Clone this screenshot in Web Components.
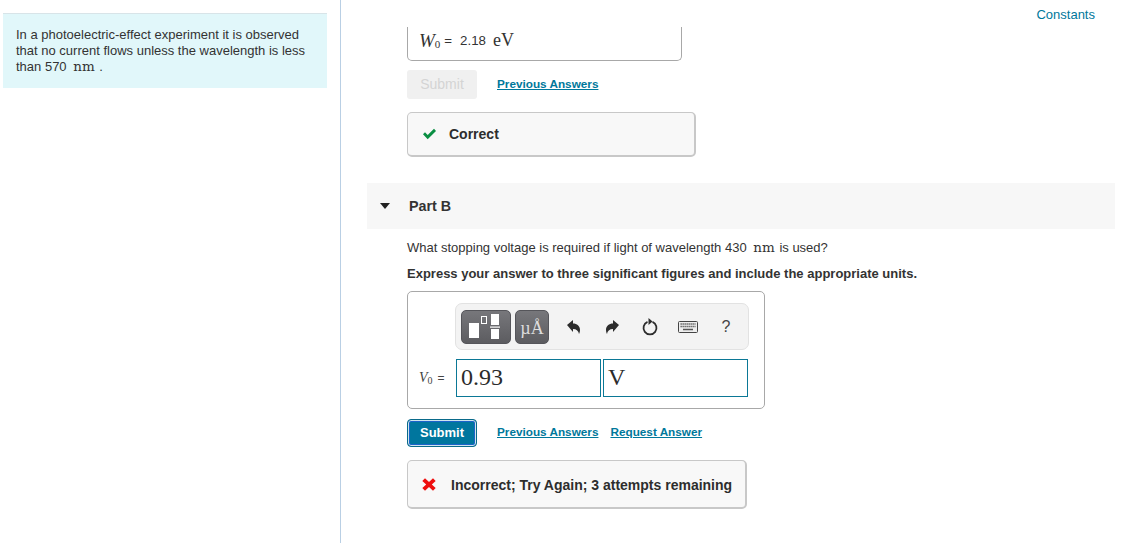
<!DOCTYPE html>
<html>
<head>
<meta charset="utf-8">
<title>Part B</title>
<style>
    html, body { margin: 0; height: 543px; overflow: hidden; background: #fff; }
    body { font-family: "Liberation Sans", Arial, sans-serif; font-size: 13px; color: #333; }
</style>
</head>
<body>
<quiz-page>
    <intro-panel slot="side">In a photoelectric-effect experiment it is observed<br>that no current flows unless the wavelength is less<br>than 570 <unit-text>nm</unit-text> .</intro-panel>

    <cut-answer></cut-answer>
    <action-row disabled></action-row>
    <feedback-box kind="ok" style="width:289px;height:45px;margin-top:13px">Correct</feedback-box>
    <part-header>Part B</part-header>
    <p-line style="margin-top:10px">What stopping voltage is required if light of wavelength 430 <unit-text>nm</unit-text> is used?</p-line>
    <p-line bold style="margin-top:8px">Express your answer to three significant figures and include the appropriate units.</p-line>
    <answer-box></answer-box>
    <action-row request></action-row>
    <feedback-box kind="bad" style="width:340px;height:49px;margin-top:13px;padding-top:1px">Incorrect; Try Again; 3 attempts remaining</feedback-box>
</quiz-page>

<script>
// page frame: left panel, divider, main column
class QuizPage extends HTMLElement {
    connectedCallback() {
        const root = this.attachShadow({ mode: "open" });
        root.innerHTML = `
        <style>
            :host { display: grid; grid-template-columns: 341px 1fr; height: 543px; }
            aside { border-right: 1px solid #b9cfe4; padding: 13px 13px 0 3px; }
            main { padding-left: 26px; min-width: 0; }
            .top { height: 27px; padding-right: 51px; text-align: right; line-height: 29px; font-size: 13px; }
            .top a { color: #00789b; text-decoration: none; }
            .body { display: flex; flex-direction: column; align-items: flex-start; padding-left: 40px; }
        </style>
        <aside><slot name="side"></slot></aside>
        <main>
            <div class="top"><a href="#">Constants</a></div>
            <div class="body"><slot></slot></div>
        </main>`;
    }
}

class IntroPanel extends HTMLElement {
    connectedCallback() {
        const root = this.attachShadow({ mode: "open" });
        root.innerHTML = `
        <style>
            :host { display: block; box-sizing: border-box; width: 324px; height: 75px; background: #e1f7fa;
                border-top: 1px solid #d8e4e8; padding: 13px 13px 0; line-height: 16px; font-size: 13px; color: #333; }
        </style>
        <slot></slot>`;
    }
}

class UnitText extends HTMLElement {
    connectedCallback() {
        const root = this.attachShadow({ mode: "open" });
        root.innerHTML = `
        <style>
            :host { font-family: "DejaVu Serif", "Liberation Serif", serif; font-size: 13.5px; line-height: 0; margin: 0 1px 0 3px; }
        </style>
        <slot></slot>`;
    }
}

class CutAnswer extends HTMLElement {
    connectedCallback() {
        const root = this.attachShadow({ mode: "open" });
        root.innerHTML = `
        <style>
            :host { display: flex; align-items: center; box-sizing: border-box; width: 275px; height: 34px;
                border: 1px solid #a8a8a8; border-top: 0; border-radius: 0 0 5px 5px; padding: 0 10px 6px 11px; font-size: 13.3px; color: #333; }
            i { font: italic 19px "Liberation Serif", serif; }
            sub { font: 11px "Liberation Serif", serif; margin-top: 7px; }
            .eq { margin: 0 8px 0 4px; }
            .u { font: 18px "Liberation Serif", serif; margin-left: 7px; }
        </style>
        <i>W</i><sub>0</sub><span class="eq">=</span><span>2.18</span><span class="u">eV</span>`;
    }
}

class ActionRow extends HTMLElement {
    connectedCallback() {
        const off = this.hasAttribute("disabled");
        const root = this.attachShadow({ mode: "open" });
        root.innerHTML = `
        <style>
            :host { display: flex; align-items: center; gap: 12px; margin-top: ${off ? 9 : 10}px; height: ${off ? 29 : 28}px; }
            button { box-sizing: border-box; width: 70px; height: 100%; margin-right: 8px; padding: 0 0 1px; border-radius: 3px; }
            .off { background: #f0f0f0; color: #d4d4d4; border: 0; font: 14px "Liberation Sans", sans-serif; }
            .on { background: #00769e; color: #fff; border: 1px solid #0a6a8a; border-radius: 4px; font: bold 13px "Liberation Sans", sans-serif;
                box-shadow: inset 0 0 0 1px #cfe5ee, inset 0 0 0 2px #1b63c9; }
            a { color: #00789b; font-weight: bold; font-size: 11.75px; margin-bottom: ${off ? 2 : 3}px; }
        </style>
        <button class="${off ? "off" : "on"}">Submit</button>
        <a href="#">Previous Answers</a>
        ${this.hasAttribute("request") ? '<a href="#">Request Answer</a>' : ""}`;
    }
}

class FeedbackBox extends HTMLElement {
    connectedCallback() {
        const ok = this.getAttribute("kind") === "ok";
        const icon = ok
            ? `<svg width="15" height="12" viewBox="0 0 15 12"><path d="M1 6.300 3 4.200 5.700 7 12 .8l2 2.100-8.300 8.400z" fill="#0a8f43"/></svg>`
            : `<svg width="14" height="13" viewBox="0 0 14 13"><path d="M3 .3 7 4 11 .3l2.700 2.600L9.800 6.500l3.900 3.600-2.700 2.600L7 9 3 12.700.3 10.100l3.900-3.600L.3 2.900z" fill="#ee0f0f"/></svg>`;
        const root = this.attachShadow({ mode: "open" });
        root.innerHTML = `
        <style>
            :host { display: flex; align-items: center; box-sizing: border-box; background: #f8f8f8;
                border: 1px solid #c8c8c8; border-right-width: 2px; border-bottom-width: 2px; border-radius: 5px; padding-left: 14px;
                font-weight: bold; font-size: 14px; color: #2d2d2d; }
            span { margin-left: ${ok ? 12 : 15}px; }
            svg { flex: none; }
        </style>
        ${icon}<span><slot></slot></span>`;
    }
}

class PartHeader extends HTMLElement {
    connectedCallback() {
        const root = this.attachShadow({ mode: "open" });
        root.innerHTML = `
        <style>
            :host { display: flex; align-items: center; box-sizing: border-box; width: 748px; height: 46px; margin: 26px 0 0 -40px;
                background: #f7f7f7; padding-left: 13px; font-weight: bold; font-size: 14.3px; color: #333; }
            i { width: 0; height: 0; border: 5.5px solid transparent; border-top: 6px solid #222; border-bottom: 0; margin-right: 19px; }
        </style>
        <i></i><slot></slot>`;
    }
}

class PLine extends HTMLElement {
    connectedCallback() {
        const bold = this.hasAttribute("bold");
        const root = this.attachShadow({ mode: "open" });
        root.innerHTML = `
        <style>
            :host { display: block; height: 18px; line-height: 18px; font-size: 13px; font-weight: ${bold ? "bold" : "normal"}; color: #333; white-space: nowrap; }
        </style>
        <slot></slot>`;
    }
}

class MathToolbar extends HTMLElement {
    connectedCallback() {
        const root = this.attachShadow({ mode: "open" });
        root.innerHTML = `
        <style>
            :host { display: flex; align-items: center; box-sizing: border-box; width: 294px; height: 47px; background: #f3f3f3;
                border: 1px solid #e2e2e2; border-radius: 7px; padding-left: 5px; }
            .dark { box-sizing: border-box; height: 34px; border: 1px solid #55555a; border-radius: 5px;
                background: linear-gradient(#77777b, #5c5c60); display: flex; align-items: center; justify-content: center; }
            .t { width: 50px; margin-right: 4px; }
            .m { width: 34px; color: #ddd; font: 18px "Liberation Serif", serif; padding-top: 3px; }
            .tool { width: 38px; display: flex; justify-content: center; align-items: center; color: #444; }
            .q { font-size: 16px; }
        </style>
        <div class="dark t">
            <svg width="40" height="28" viewBox="0 0 40 28" fill="#fff"><rect x="3" y="10" width="10" height="15"/><rect x="15.500" y="3.500" width="5" height="7" fill="none" stroke="#fff"/><rect x="25" y="1" width="8" height="11"/><rect x="24" y="13.500" width="10" height="1.200"/><rect x="25" y="16" width="8" height="10"/></svg>
        </div>
        <div class="dark m">µÅ</div>
        <div class="tool" style="margin-left:6px"><svg width="16" height="16" viewBox="0 0 16 16"><path d="M1 6 7 1v3.500c4 0 7 2.500 7 6.500 0 1.500-.5 3-1 4-.3-3-2.500-5-6-5v3z" fill="#2c2c2c"/></svg></div>
        <div class="tool"><svg width="16" height="16" viewBox="0 0 16 16"><path d="M15 6 9 1v3.500c-4 0-7 2.500-7 6.500 0 1.500.5 3 1 4 .3-3 2.500-5 6-5v3z" fill="#2c2c2c"/></svg></div>
        <div class="tool"><svg width="18" height="18" viewBox="0 0 18 18"><path d="M6.500 3.900a6.500 6.500 0 1 0 5 0" fill="none" stroke="#2c2c2c" stroke-width="1.800"/><path d="M7.500 0v7l4-3.500z" fill="#2c2c2c"/></svg></div>
        <div class="tool"><svg width="20" height="12" viewBox="0 0 20 12"><rect x=".5" y=".5" width="19" height="11" rx="1" fill="#eee" stroke="#444"/><path d="M2.500 3h15M2.500 5.500h15" stroke="#555" stroke-width="1.300" stroke-dasharray="1.300 .7"/><path d="M5 8.500h10" stroke="#555" stroke-width="1.500"/></svg></div>
        <div class="tool q">?</div>`;
    }
}

class AnswerBox extends HTMLElement {
    connectedCallback() {
        const root = this.attachShadow({ mode: "open" });
        root.innerHTML = `
        <style>
            :host { display: block; box-sizing: border-box; width: 358px; height: 118px; margin-top: 8px;
                border: 1px solid #a8a8a8; border-radius: 5px; padding: 11px 0 0 47px; }
            .row { display: flex; align-items: center; margin-top: 9px; margin-left: -36px; gap: 2px; }
            .lab { width: 35px; font-size: 12px; color: #444; white-space: nowrap; }
            .lab i { font: italic 14px "Liberation Serif", serif; }
            .lab sub { font: 10px "Liberation Serif", serif; vertical-align: -2px; margin-right: 5px; }
            .inp { box-sizing: border-box; width: 145px; height: 38px; border: 1px solid #0b7896; padding-left: 4px;
                font: 24px/35px "Liberation Serif", serif; color: #2b2b2b; }
        </style>
        <math-toolbar></math-toolbar>
        <div class="row">
            <div class="lab"><i>V</i><sub>0</sub>=</div>
            <div class="inp">0.93</div>
            <div class="inp">V</div>
        </div>`;
    }
}

customElements.define("quiz-page", QuizPage);
customElements.define("intro-panel", IntroPanel);
customElements.define("unit-text", UnitText);
customElements.define("cut-answer", CutAnswer);
customElements.define("action-row", ActionRow);
customElements.define("feedback-box", FeedbackBox);
customElements.define("part-header", PartHeader);
customElements.define("p-line", PLine);
customElements.define("math-toolbar", MathToolbar);
customElements.define("answer-box", AnswerBox);
</script>
</body>
</html>
